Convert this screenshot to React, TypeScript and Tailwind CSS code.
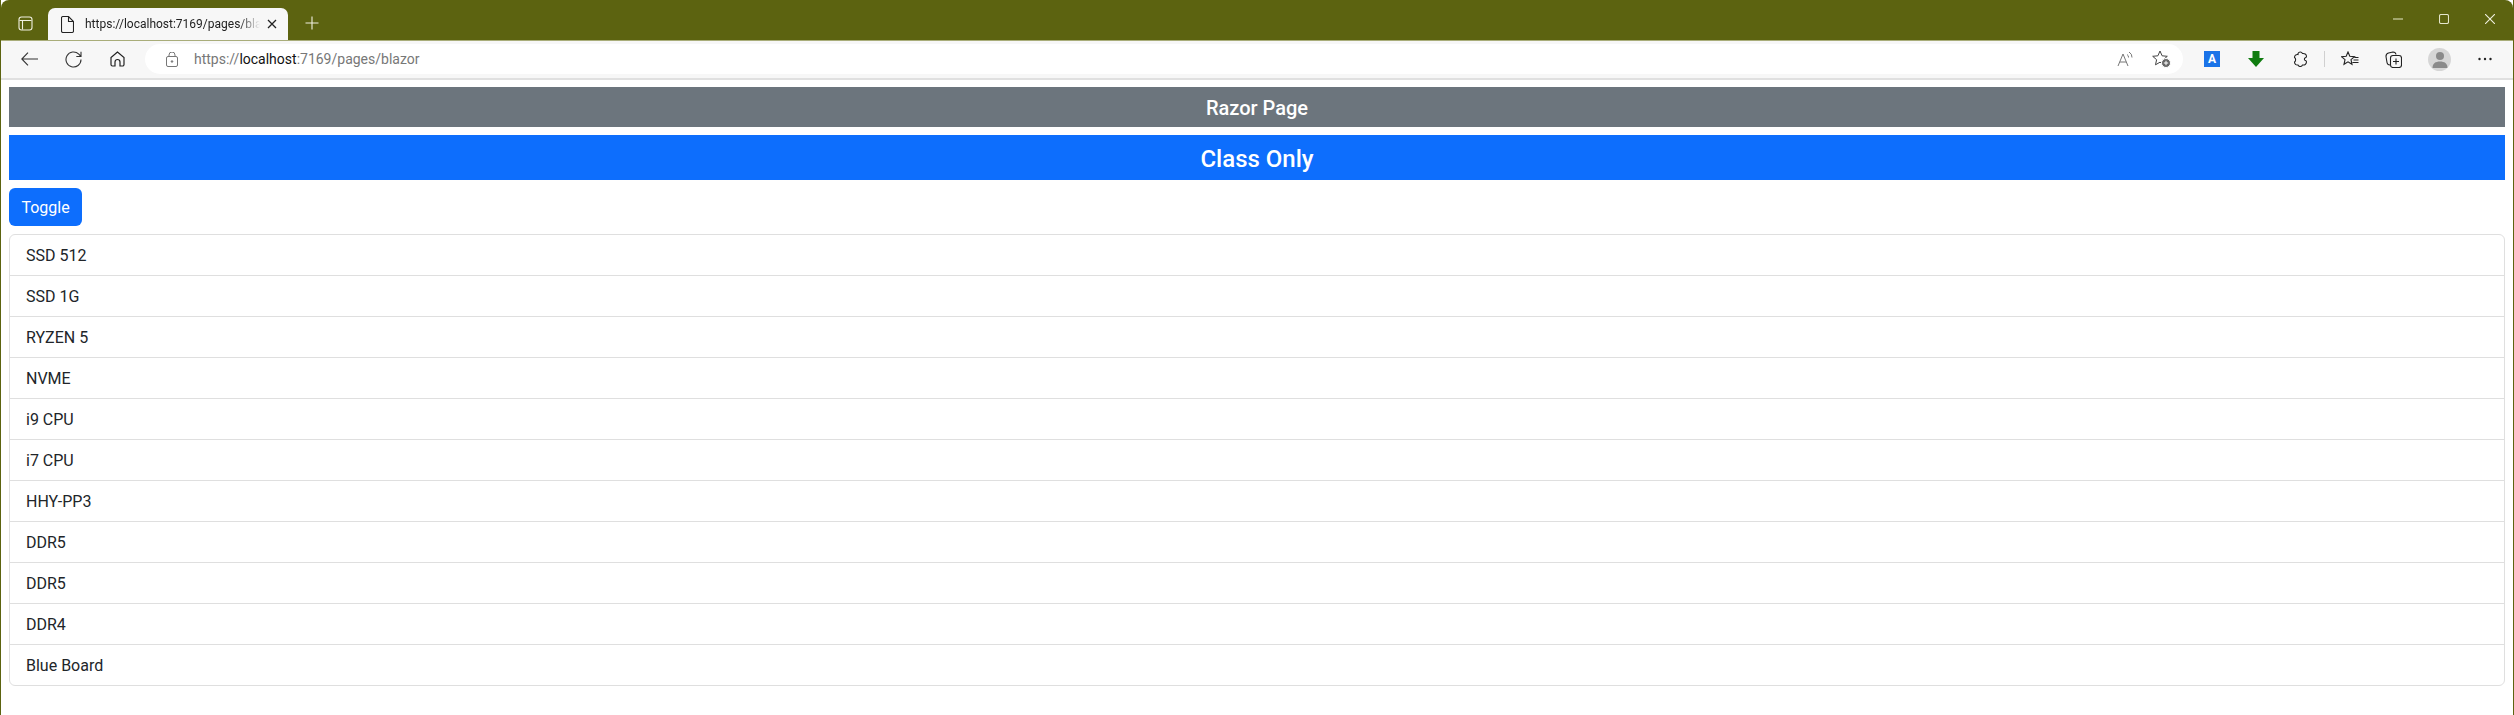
// App.tsx
const items = ['SSD 512', 'SSD 1G', 'RYZEN 5', 'NVME', 'i9 CPU', 'i7 CPU', 'HHY-PP3', 'DDR5', 'DDR5', 'DDR4', 'Blue Board'];

const sans = { fontFamily: 'Roboto, "Noto Sans", sans-serif' };

function TabBar() {
  return (
    <div className="flex h-[41px] items-end rounded-t-[8px] border-b border-[#a9ad7a] bg-[#5c6310]">
      <div className="flex h-[32px] w-[47px] items-center justify-center pl-[2px] pb-[1px]">
        <svg width="15" height="15" viewBox="0 0 15 15" fill="none" stroke="#f0f0e0" strokeWidth="1.1">
          <rect x="1" y="1" width="13" height="13" rx="2.500" />
          <path d="M1.500 4.500h12M4.500 4.500v9" />
        </svg>
      </div>
      <div className="flex h-[32px] w-[240px] items-center rounded-t-[7px] bg-[#f7f7f7] pl-[13px] pr-[11px]">
        <svg width="13" height="17" viewBox="0 0 13 17" fill="none" stroke="#222" strokeWidth="1.1" className="shrink-0">
          <path d="M2 .5h5.500L12.500 5.500v9.500a1.500 1.500 0 0 1-1.500 1.500H2A1.500 1.500 0 0 1 .5 15V2A1.500 1.500 0 0 1 2 .5zM7.500 .5v5h5" />
        </svg>
        <span className="ml-[11px] w-[175px] overflow-hidden whitespace-nowrap text-[12px] text-[#222] [mask-image:linear-gradient(to_right,black_88%,transparent)]">
          https://localhost:7169/pages/blazor
        </span>
        <svg width="10" height="10" viewBox="0 0 10 10" stroke="#222" strokeWidth="1.3" className="ml-[7px] shrink-0">
          <path d="M1 1l8 8M9 1l-8 8" />
        </svg>
      </div>
      <div className="flex h-[32px] w-[48px] items-center justify-center pb-[2px]">
        <svg width="14" height="14" viewBox="0 0 14 14" stroke="#f0f0e0" strokeWidth="1.1">
          <path d="M7 0.500v13M0.500 7h13" />
        </svg>
      </div>
      <div className="flex-1" />
      <div className="flex h-[40px] items-center gap-[36px] pr-[18px] pb-[3px]">
        <svg width="10" height="10" viewBox="0 0 10 10" stroke="#c8cba0" strokeWidth="1.3">
          <path d="M0 5h10" />
        </svg>
        <svg width="10" height="10" viewBox="0 0 10 10" fill="none" stroke="#e4e6cc" strokeWidth="1.1">
          <rect x="0.500" y="0.500" width="9" height="9" rx="1.500" />
        </svg>
        <svg width="10" height="10" viewBox="0 0 10 10" stroke="#f0f0e0" strokeWidth="1.1">
          <path d="M0 0l10 10M10 0L0 10" />
        </svg>
      </div>
    </div>
  );
}

function Toolbar() {
  return (
    <div className="flex h-[39px] items-center border-b-2 border-[#e0e0e0] bg-[#f7f7f7] pb-[1px]">
      <div className="flex w-[144px] items-center">
        <svg width="17" height="14" viewBox="0 0 17 14" fill="none" stroke="#333" strokeWidth="1.1" className="ml-[20px]">
          <path d="M17 7H1M7 .7L.8 7 7 13.300" />
        </svg>
        <svg width="17" height="17" viewBox="0 0 17 17" fill="none" stroke="#333" strokeWidth="1.1" className="ml-[27px]">
          <path d="M16 8.500a7.500 7.500 0 1 1-2.200-5.300L16 5.500M16 .8v4.700h-4.700" />
        </svg>
        <svg width="15" height="16" viewBox="0 0 15 16" fill="none" stroke="#222" strokeWidth="1.2" className="ml-[28px]">
          <path d="M7.500 1L1 6.500v7a1.500 1.500 0 0 0 1.500 1.500H5v-4a2.500 2.500 0 0 1 5 0v4h2.500a1.500 1.500 0 0 0 1.500-1.500v-7z" />
        </svg>
      </div>
      <div className="flex h-[30px] w-[2038px] items-center rounded-full bg-white">
        <svg width="12" height="15" viewBox="0 0 12 15" fill="none" stroke="#777" strokeWidth="1" className="ml-[21px]">
          <rect x="0.500" y="4.500" width="11" height="10" rx="1.500" />
          <path d="M3 4.500V3a3 3 0 0 1 6 0v1.500" />
          <circle cx="6" cy="9.500" r="0.800" fill="#777" />
        </svg>
        <span className="ml-[16px] text-[14px] text-[#777]">
          https://<span className="text-[#111]">localhost</span>:7169/pages/blazor
        </span>
        <div className="flex-1" />
        <svg width="16" height="16" viewBox="0 0 16 16" fill="none" stroke="#777" strokeWidth="1">
          <path d="M1 15L6 3l5 12M2.800 11h6.400M10 3.500a3 3 0 0 1 1.500 3M12 1a6 6 0 0 1 3 5.500" />
        </svg>
        <svg width="19" height="18" viewBox="0 0 19 18" fill="none" stroke="#444" strokeWidth="1" className="ml-[19px] mr-[12px]">
          <path d="M8 1l2.100 4.800 5.200.5-3.900 3.400 1.100 5.100L8 12.200l-4.500 2.600 1.100-5.100L.7 6.300l5.200-.5z" />
          <circle cx="14" cy="13" r="4.500" fill="#666" stroke="#fff" />
          <path d="M14 10.800v4.400M11.800 13h4.400" stroke="#fff" />
        </svg>
      </div>
      <div className="flex flex-1 items-center">
        <div className="ml-[21px] flex h-[16px] w-[16px] items-center justify-center bg-[#1a73e8] text-[12px] font-bold text-white">
          A
        </div>
        <svg width="16" height="16" viewBox="0 0 16 16" fill="#107c10" className="ml-[28px]">
          <path d="M4.500 0h7v7H16l-8 9-8-9h4.500z" />
        </svg>
        <svg width="15" height="16" viewBox="0 0 15 16" fill="none" stroke="#222" strokeWidth="1.1" className="ml-[29px]">
          <path d="M5 2.500C6 .5 8.500.5 9.500 2.500c2-.3 4 .7 4 3-.1 1-.8 1.300-1.500 1.500-.8.300-.8 2 0 2.300 .8.200 1.400.600 1.500 1.500 0 2.500-2 3.500-4 3.200-1 2-3.500 2-4.500 0-2 .3-3.500-1-3.500-3 1.500-.7 1.500-3.800 0-4.500 0-2 1.500-3.300 3.500-3z" />
        </svg>
        <div className="ml-[16px] h-[16px] w-px bg-[#d0d0d0]" />
        <svg width="18" height="17" viewBox="0 0 18 17" fill="none" stroke="#222" strokeWidth="1.1" className="ml-[16px]">
          <path d="M7 1l1.800 4.300 4.700.4-3.500 3 1 4.600L7 10.900l-4 2.400 1-4.600-3.500-3 4.700-.4zM12.500 9h5M11.500 11.500h6M13.500 6.500h4" />
        </svg>
        <svg width="17" height="17" viewBox="0 0 17 17" fill="none" stroke="#222" strokeWidth="1.1" className="ml-[26px]">
          <path d="M5 14a3 3 0 0 1-3-2.500L1 5.500A3.500 3.500 0 0 1 3.500 2L8 1a3 3 0 0 1 3 2.500" />
          <rect x="5.500" y="4.500" width="11" height="12" rx="2.500" />
          <path d="M11 7.500v6M8 10.500h6" />
        </svg>
        <div className="ml-[26px] flex h-[23px] w-[23px] items-center justify-center overflow-hidden rounded-full bg-[#d6d6d6]">
          <svg width="18" height="18" viewBox="0 0 18 18" fill="#8a8a8a">
            <circle cx="9" cy="6" r="4" />
            <path d="M1.500 18c0-4.500 3-6.500 7.500-6.500s7.500 2 7.500 6.500z" />
          </svg>
        </div>
        <svg width="14" height="4" viewBox="0 0 14 4" fill="#222" className="ml-[27px]">
          <circle cx="1.500" cy="2" r="1.200" />
          <circle cx="7" cy="2" r="1.200" />
          <circle cx="12.500" cy="2" r="1.200" />
        </svg>
      </div>
    </div>
  );
}

export default function App() {
  return (
    <div className="flex h-[715px] flex-col overflow-hidden border-x border-[#5c6310] bg-white" style={sans}>
      <TabBar />
      <Toolbar />
      <div className="flex flex-col px-[8px] pt-[7px]">
        <div className="flex h-[40px] items-center justify-center bg-[#6c757d] pt-[2px] text-[20px] font-medium text-white">
          Razor Page
        </div>
        <div className="mt-[8px] flex h-[45px] items-center justify-center bg-[#0d6efd] pt-[2px] text-[24px] font-medium text-white">
          Class Only
        </div>
        <button className="mt-[8px] h-[38px] w-[73px] rounded-[6px] bg-[#0d6efd] pt-[1px] text-[16px] text-white">
          Toggle
        </button>
        <ul className="mt-[8px] overflow-hidden rounded-[6px] border border-[#dfdfdf]">
          {items.map((item, i) => (
            <li key={i} className="flex h-[41px] items-center border-b border-[#dfdfdf] px-[16px] pt-[2px] text-[16px] text-[#212529] last:h-[40px] last:border-b-0">
              {item}
            </li>
          ))}
        </ul>
      </div>
    </div>
  );
}
